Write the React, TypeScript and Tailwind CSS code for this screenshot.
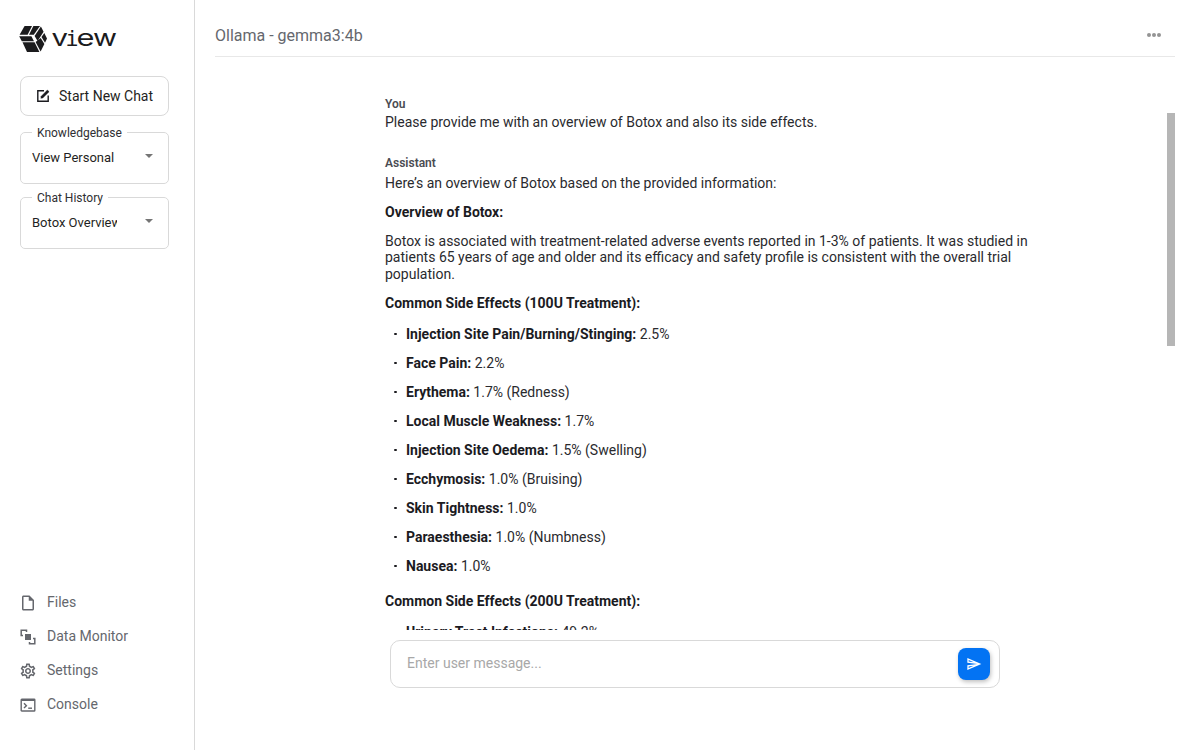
import { useState } from "react";
import type { ReactNode } from "react";
import { MdOutlineInsertDriveFile, MdOutlineSend, MdOutlineSettings } from "react-icons/md";

const common: [string, string][] = [
  ["Injection Site Pain/Burning/Stinging:", "2.5%"],
  ["Face Pain:", "2.2%"],
  ["Erythema:", "1.7% (Redness)"],
  ["Local Muscle Weakness:", "1.7%"],
  ["Injection Site Oedema:", "1.5% (Swelling)"],
  ["Ecchymosis:", "1.0% (Bruising)"],
  ["Skin Tightness:", "1.0%"],
  ["Paraesthesia:", "1.0% (Numbness)"],
  ["Nausea:", "1.0%"],
];

const common200: [string, string][] = [["Urinary Tract Infections:", "49.2%"]];

function Logo() {
  return (
    <div className="flex h-[28px] items-center">
      <svg width="28" height="28" viewBox="0 0 28 28" fill="#1b1b1d" className="-ml-px shrink-0">
        <path d="M5.6 1H13L8.6 9.8H0.6Z" />
        <path d="M14.4 1H21L14.8 9.8H10Z" />
        <path d="M0.2 11.2H12.4L15 16.2H2.8Z" />
        <path d="M3.5 17.3H15.6L20.4 27H8Z" />
        <path d="M21.9 1.6L24.6 6.8L18.6 16L15.6 11Z" />
        <path d="M25.3 8L28 13.4L26 17.8L22.5 11.9Z" />
        <path d="M21.7 13L25.4 19L21.6 26.4L16.6 17Z M19.2 16.6" />
      </svg>
      <svg width="66" height="28" viewBox="0 0 66 28" fill="#1b1b1d" className="ml-[5px]">
        <text x="-0.5" y="21" fontFamily="Inter" fontSize="23.5" textLength="16.5" lengthAdjust="spacingAndGlyphs">v</text>
        <text x="13.5" y="21" fontFamily="DejaVu Sans Mono" fontSize="21" textLength="13" lengthAdjust="spacingAndGlyphs">i</text>
        <text x="24.5" y="21" fontFamily="Inter" fontSize="23.5" textLength="18" lengthAdjust="spacingAndGlyphs">e</text>
        <text x="41" y="21" fontFamily="Inter" fontSize="23.5" textLength="24" lengthAdjust="spacingAndGlyphs">w</text>
      </svg>
    </div>
  );
}

function SelectBox({ label, value }: { label: string; value: string }) {
  return (
    <fieldset className="h-[58px] rounded-[5px] border border-[#d9d9d9] px-[11px]">
      <legend className="px-[5px] pt-px text-[12px] leading-[12px] text-[#2f2f33]">{label}</legend>
      <div className="flex h-[34px] items-center">
        <span className="w-[85px] overflow-hidden pt-[4px] text-[13px] whitespace-nowrap">{value}</span>
        <svg width="8" height="4" viewBox="0 0 8 4" className="ml-[28px]" fill="#757575">
          <path d="M0 0h8L4 4z" />
        </svg>
      </div>
    </fieldset>
  );
}

function MonitorIcon() {
  return (
    <svg width="16" height="16" viewBox="0 0 16 16" fill="none" stroke="currentColor" strokeWidth="1.5" className="mr-px ml-px">
      <path d="M6.5 3V1.2H1.2V6.5H3" />
      <path d="M9.5 13V14.8H14.8V9.5H13" />
      <rect x="5" y="5" width="6" height="6" fill="currentColor" stroke="none" />
    </svg>
  );
}

function ConsoleIcon() {
  return (
    <svg width="16" height="16" viewBox="0 0 16 16" fill="none" stroke="currentColor" strokeWidth="1.4" className="mr-px ml-px">
      <rect x="1.2" y="2.2" width="13.6" height="11.8" rx="0.6" />
      <path d="M1.2 3.1H14.8" strokeWidth="1.8" />
      <path d="M4 6.3L6.4 8.7L4 11.1" />
      <path d="M8.2 11.2H12" />
    </svg>
  );
}

function NavItem({ icon, label }: { icon: ReactNode; label: string }) {
  return (
    <a className="flex h-[34px] items-center gap-[10px]">
      <span className="-ml-px pt-[2px]">{icon}</span>
      {label}
    </a>
  );
}

function EffectList({ items }: { items: [string, string][] }) {
  return (
    <ul className="mt-[14.5px] flex flex-col gap-[12.5px]">
      {items.map(([name, rate]) => (
        <li key={name} className="flex h-[16.5px] items-center">
          <span className="mr-[9px] ml-[9px] size-[2.5px] shrink-0 rounded-full bg-[#1b1b1f]" />
          <span className="ml-[0.5px] whitespace-nowrap">
            <strong className="font-bold text-[#1b1b1f]">{name}</strong> {rate}
          </span>
        </li>
      ))}
    </ul>
  );
}

export default function App() {
  const [msg, setMsg] = useState("");
  return (
    <div className="flex h-[750px] w-[1189px] overflow-hidden bg-white font-['Roboto',sans-serif] text-[14px] text-[#1f1f23]">
      <aside className="flex w-[195px] shrink-0 flex-col border-r border-[#d9d9d9] pt-[25px] pr-[25px] pl-[20px]">
        <Logo />
        <button className="mt-[23px] flex h-[40px] w-[149px] shrink-0 items-center rounded-[8px] border border-[#d9d9d9] pl-[15px]">
          <svg width="14" height="14" viewBox="0 0 14 14" fill="none" stroke="#1b1b1f" strokeWidth="1.4">
            <path d="M8 1.8H1.8v10.4h10.4V6.5" />
            <path d="M4.8 9.3l.4-2L11.4 1l1.7 1.7-6.3 6.2z" fill="#1b1b1f" strokeWidth=".4" />
          </svg>
          <span className="ml-[9px]">Start New Chat</span>
        </button>
        <div className="mt-[10px] flex w-[149px] flex-col gap-[7px]">
          <SelectBox label="Knowledgebase" value="View Personal" />
          <SelectBox label="Chat History" value="Botox Overview" />
        </div>
        <nav className="mt-auto mb-[29px] flex flex-col text-[#65676d]">
          <NavItem icon={<MdOutlineInsertDriveFile size={18} />} label="Files" />
          <NavItem icon={<MonitorIcon />} label="Data Monitor" />
          <NavItem icon={<MdOutlineSettings size={18} />} label="Settings" />
          <NavItem icon={<ConsoleIcon />} label="Console" />
        </nav>
      </aside>
      <main className="flex w-[994px] flex-col pr-[14px] pl-[20px]">
        <header className="flex h-[57px] shrink-0 items-center justify-between border-b border-[#e8e8e8] pt-[15px] pr-[14px] text-[16px] text-[#65676d]">
          <h1>Ollama - gemma3:4b</h1>
          <div className="mb-[2px] flex gap-px">
            <span className="size-[4px] rounded-full bg-[#949494]" />
            <span className="size-[4px] rounded-full bg-[#949494]" />
            <span className="size-[4px] rounded-full bg-[#949494]" />
          </div>
        </header>
        <div className="flex h-[573px] shrink-0 justify-between overflow-hidden pt-[39px] pl-[170px]">
          <article className="w-[660px] leading-[16.5px] text-[#2a2a2e]">
            <div className="text-[12px] font-semibold text-[#4a4c52]">You</div>
            <p className="mt-px">Please provide me with an overview of Botox and also its side effects.</p>
            <div className="mt-[25px] text-[12px] font-semibold text-[#4a4c52]">Assistant</div>
            <p className="mt-[3.25px]">Here’s an overview of Botox based on the provided information:</p>
            <p className="mt-[12.5px] font-bold text-[#1b1b1f]">Overview of Botox:</p>
            <p className="mt-[12.5px]">
              Botox is associated with treatment-related adverse events reported in 1-3% of patients. It was studied in patients 65 years of age and older and its efficacy and safety profile is consistent with the overall trial population.
            </p>
            <p className="mt-[12.5px] font-bold text-[#1b1b1f]">Common Side Effects (100U Treatment):</p>
            <EffectList items={common} />
            <p className="mt-[18.5px] font-bold text-[#1b1b1f]">Common Side Effects (200U Treatment):</p>
            <EffectList items={common200} />
          </article>
          <div className="mt-[17px] h-[233px] w-[8px] bg-[#b6b6b6]" />
        </div>
        <div className="mt-[10px] ml-[175px] flex h-[48px] w-[610px] shrink-0 items-center justify-between rounded-[10px] border border-[#d9d9d9] pr-[9px] pl-4">
          <input
            value={msg}
            onChange={(e) => setMsg(e.target.value)}
            placeholder="Enter user message..."
            className="mb-[2px] flex-1 outline-none placeholder:text-[#a8a8a8]"
          />
          <button className="flex size-[32px] items-center justify-center rounded-[8px] bg-[#0373f3] text-white shadow-[1px_2px_4px_rgba(0,0,0,0.25)]">
            <MdOutlineSend size={16} />
          </button>
        </div>
      </main>
    </div>
  );
}
